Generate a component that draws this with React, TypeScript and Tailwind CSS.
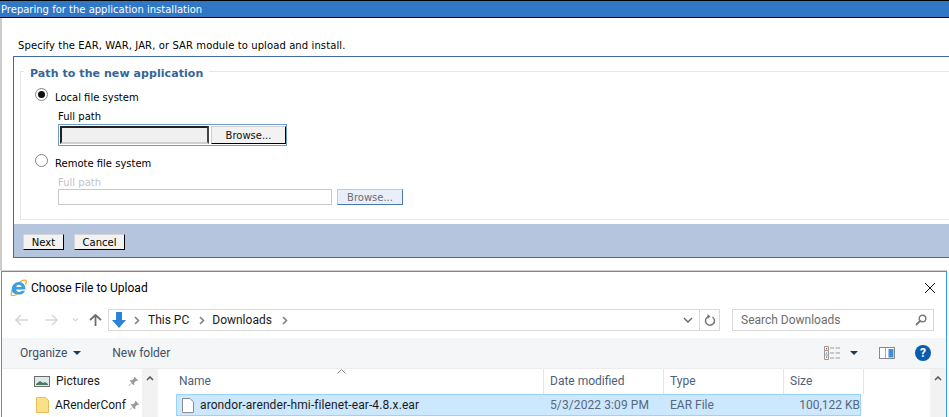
import React from "react";

const verdana = "font-['DejaVu_Sans',sans-serif]";
const segoe = "font-['Roboto',sans-serif]";

function Radio({ checked }: { checked?: boolean }) {
  return (
    <span className="w-[13px] h-[13px] rounded-full border border-[#858585] bg-white flex items-center justify-center shrink-0">
      {checked && <span className="w-[7px] h-[7px] rounded-full bg-[#111]" />}
    </span>
  );
}

function IeIcon() {
  return (
    <svg width="17" height="17" viewBox="0 0 17 17" className="shrink-0">
      <path d="M1.500 15.500C.5 13.500 3 9 6 6.200 9.500 3 13.800 .6 15.600 1.400c1.200.6.700 2.800-.2 4.300" fill="none" stroke="#f2b02e" strokeWidth="1.400" />
      <path d="M1.800 10C2 6 5 3 9 3c3.800 0 6.600 2.800 6.400 7.400H6.200c.2 1.600 1.300 2.500 2.900 2.500 1 0 1.900-.4 2.500-1.200h3.500c-.9 2.400-3.200 3.900-6 3.900C4.800 15.600 1.600 13.800 1.800 10zM6.200 8h5.400c-.2-1.500-1.200-2.300-2.700-2.300S6.500 6.500 6.200 8z" fill="#3d9fe0" />
      <path d="M.8 15.800c1.400 1.200 4.200.6 6.400-.6" fill="none" stroke="#f2b02e" strokeWidth="1.300" />
    </svg>
  );
}

function Chevron() {
  return (
    <svg width="6" height="9" viewBox="0 0 6 9" className="shrink-0 block">
      <path d="M1 1l3.500 3.500L1 8" fill="none" stroke="#808080" strokeWidth="1.600" />
    </svg>
  );
}

function PinIcon() {
  return (
    <svg width="11" height="11" viewBox="0 0 11 11" className="shrink-0">
      <path d="M6.500.8l3.700 3.700-1 .6-1-.3-2 2 .2 1.700-.8.8-2-2L1 9.900l-.4-.4 3.100-2.700-2-2 .8-.8 1.700.2 2-2-.3-1z" fill="#9a9a9a" />
    </svg>
  );
}

function ColHead({ children, w }: { children: React.ReactNode; w: string }) {
  return (
    <div className={`${w} h-[25px] border-r border-[#e5e5e5] pl-[6px] pt-[3px] text-[12px] leading-[18px] text-[#4c607a] shrink-0`}>
      {children}
    </div>
  );
}

export default function App() {
  return (
    <div className="w-[949px] h-[417px] overflow-hidden bg-white flex flex-col">
      {/* IBM console page */}
      <div className={`${verdana} h-[270px] shrink-0 flex flex-col text-[10px] text-black`}>
        <div className="h-[18px] shrink-0 bg-[#3077c6] border-y border-black pl-[1px] text-white text-[10px] leading-[17px]">
          Preparing for the application installation
        </div>
        <div className="flex-1 border-l-2 border-[#cccccc] pl-[11px] flex flex-col">
          <p className="h-[38px] shrink-0 pl-[5px] pt-[21px] leading-[14px] tracking-[0.1px]">
            Specify the EAR, WAR, JAR, or SAR module to upload and install.
          </p>
          <div className="w-[936px] h-[202px] shrink-0 border-t border-l border-b border-[#4369a8] flex flex-col">
            <div className="relative h-[167px] shrink-0 pl-[6px] pt-[14px] pb-[4px]">
              <div className="h-[149px] border-t border-l border-b border-[#e6e6e6] pl-[14px] pt-[16px] flex flex-col">
                <span className="absolute left-[10px] top-[9px] bg-white px-[6px] text-[11px] tracking-[0.07px] leading-[16px] font-bold text-[#336699]">
                  Path to the new application
                </span>
                <label className="flex items-start h-[14px] gap-[7px]">
                  <Radio checked />
                  <span className="leading-[12px] mt-[4px]">Local file system</span>
                </label>
                <div className="ml-[23px] mt-[8px] leading-[14px] h-[14px]">Full path</div>
                <div className="ml-[23px] w-[229px] h-[22px] border border-[#6f9cc8] bg-white flex items-center pl-[1px] gap-[2px]">
                  <div className="w-[149px] h-[18px] border-2 border-t-[#222] border-l-[#222] border-r-[#444] border-b-[#cfcfcf] bg-[#f0f0f0]" />
                  <div className="w-[75px] h-[18px] bg-[#f2f2f2] border border-r-black border-b-black border-t-[#cfcfcf] border-l-[#cfcfcf] flex items-center justify-center text-[#111]">
                    Browse...
                  </div>
                </div>
                <label className="flex items-start h-[15px] gap-[7px] mt-[8px]">
                  <Radio />
                  <span className="leading-[12px] mt-[4px]">Remote file system</span>
                </label>
                <div className="ml-[23px] mt-[7px] h-[13px] leading-[14px] text-[#c4c4c4]">Full path</div>
                <div className="ml-[23px] flex items-center gap-[5px]">
                  <div className="w-[274px] h-[16px] border border-[#c8c8c8] bg-white" />
                  <div className="w-[66px] h-[16px] bg-[#e8effa] border border-[#b9cbe5] border-r-[#4a78ae] border-b-[#4a78ae] flex items-center justify-center text-[#6e6e6e]">
                    Browse...
                  </div>
                </div>
              </div>
            </div>
            <div className="flex-1 bg-[#b5c5dd] flex items-center pl-[9px] gap-[10px] pt-[3px]">
              <div className="w-[41px] h-[16px] bg-[#f2f2f2] border border-[#d5d5d5] border-r-black border-b-black flex items-center justify-center">Next</div>
              <div className="w-[51px] h-[16px] bg-[#f2f2f2] border border-[#d5d5d5] border-r-black border-b-black flex items-center justify-center">Cancel</div>
            </div>
          </div>
        </div>
      </div>

      {/* Windows file dialog */}
      <div className="h-[1px] shrink-0 bg-[#d4d4d4] mr-[2px]" />
      <div className={`${segoe} ml-[1px] w-[946px] flex-1 border-l border-r border-t border-[#3a9ad9] flex flex-col min-h-0 text-[12px]`}>
        <div className="h-[31px] shrink-0 flex items-center pl-[8px] pr-[10px] gap-[4px]">
          <IeIcon />
          <span className="text-[12px] text-black">Choose File to Upload</span>
          <svg width="12" height="12" viewBox="0 0 12 12" className="ml-auto">
            <path d="M1 1l10 10M11 1L1 11" stroke="#111" strokeWidth="1" />
          </svg>
        </div>
        <div className="h-[35px] shrink-0 flex items-start pl-[13px] pt-[6px]">
          <svg width="88" height="22" viewBox="0 0 88 22" className="shrink-0">
            <path d="M13 11H1M6 6l-5 5 5 5" fill="none" stroke="#d8d8d8" strokeWidth="1.600" />
            <path d="M30 11h12M37 6l5 5-5 5" fill="none" stroke="#d8d8d8" strokeWidth="1.600" />
            <path d="M58 9.500l2.500 2.500 2.500-2.500" fill="none" stroke="#d8d8d8" strokeWidth="1.200" />
            <path d="M80.500 17V6M75 11l5.500-5 5.500 5" fill="none" stroke="#6d6d6d" strokeWidth="1.800" />
          </svg>
          <div className="ml-[5px] w-[612px] h-[22px] border border-[#d9d9d9] flex items-center shrink-0">
            <svg width="16" height="16" viewBox="0 0 16 16" className="ml-[2px] shrink-0">
              <path d="M5 0h6v8h4l-7 8-7-8h4z" fill="#2b84d9" />
            </svg>
            <span className="ml-[7px]"><Chevron /></span>
            <span className="ml-[8px] text-[#1a1a1a]">This PC</span>
            <span className="ml-[10px]"><Chevron /></span>
            <span className="ml-[7px] text-[#1a1a1a]">Downloads</span>
            <span className="ml-[10px]"><Chevron /></span>
            <svg width="10" height="6" viewBox="0 0 10 6" className="ml-auto mr-[6px] shrink-0">
              <path d="M1 1l4 4 4-4" fill="none" stroke="#666" strokeWidth="1.400" />
            </svg>
            <div className="w-[20px] h-full border-l border-[#d9d9d9] flex items-center justify-center">
              <svg width="12" height="13" viewBox="0 0 12 13">
                <path d="M4 2.700A4.500 4.500 0 1 0 8.500 3" fill="none" stroke="#777" strokeWidth="1.500" />
                <path d="M3.500 0v5l3-2.500z" fill="#777" />
              </svg>
            </div>
          </div>
          <div className="ml-[12px] w-[202px] h-[22px] border border-[#d9d9d9] flex items-center pl-[8px] pr-[6px] text-[#6d6d6d] shrink-0">
            <span>Search Downloads</span>
            <svg width="12" height="12" viewBox="0 0 12 12" className="ml-auto">
              <circle cx="7.500" cy="4.500" r="3.300" fill="none" stroke="#777" strokeWidth="1.400" />
              <path d="M5 7l-4 4" stroke="#777" strokeWidth="1.800" />
            </svg>
          </div>
        </div>
        <div className="h-[30px] shrink-0 bg-[#f5f6f7] flex items-center pl-[18px] pr-[15px] text-[#3e5068]">
          <span>Organize</span>
          <svg width="8" height="4" viewBox="0 0 8 4" className="ml-[6px]"><path d="M0 0h8L4 4z" fill="#1f3a5f" /></svg>
          <span className="ml-[31px]">New folder</span>
          <svg width="16" height="14" viewBox="0 0 16 14" className="ml-auto">
            <path d="M.5.5h4v13h-4zM.5 4.500h4M.5 9h4" fill="none" stroke="#9a9a9a" />
            <path d="M6 2h4M6 7h4M6 12h4M11.500 2H16M11.500 7H16M11.500 12H16" stroke="#9a9a9a" />
            <rect x="2" y="2" width="1.200" height="1.200" fill="#c0392b" />
            <rect x="2" y="6.500" width="1.200" height="1.200" fill="#3f8fdc" />
            <rect x="2" y="10.500" width="1.200" height="1.200" fill="#c0392b" />
          </svg>
          <svg width="8" height="4" viewBox="0 0 8 4" className="ml-[10px]"><path d="M0 0h8L4 4z" fill="#1f3a5f" /></svg>
          <svg width="16" height="12" viewBox="0 0 16 12" className="ml-[21px]">
            <rect x=".5" y=".5" width="15" height="11" fill="#fff" stroke="#8a8a8a" />
            <rect x="9.500" y="2" width="5" height="8.500" fill="#3f8fdc" />
            <path d="M6.500 1v10" stroke="#aaa" />
          </svg>
          <span className="ml-[20px] w-[16px] h-[16px] rounded-full bg-[#0b5cad] text-white text-[12px] font-bold flex items-center justify-center">?</span>
        </div>
        <div className="flex-1 min-h-0 flex border-t border-[#ececec] overflow-hidden">
          <div className="w-[140px] shrink-0 pl-[32px] text-[#1a1a1a]">
            <div className="h-[24px] flex items-center">
              <svg width="16" height="11" viewBox="0 0 16 11" className="shrink-0">
                <rect x=".5" y=".5" width="15" height="10" fill="#dfe8ef" stroke="#6d6d6d" />
                <path d="M2 8l4-3 3 2 2-1 3 2v1H2z" fill="#4b7a5c" />
              </svg>
              <span className="ml-[6px]">Pictures</span>
              <span className="ml-auto mr-[3px] flex"><PinIcon /></span>
            </div>
            <div className="h-[24px] flex items-center pl-[2px]">
              <svg width="13" height="16" viewBox="0 0 13 16" className="shrink-0">
                <path d="M.5.500h9l3 3v12H.5z" fill="#fbe08a" stroke="#e6bd52" />
              </svg>
              <span className="ml-[6px] whitespace-nowrap">ARenderConf</span>
              <span className="ml-[3px] flex"><PinIcon /></span>
            </div>
          </div>
          <div className="w-[16px] shrink-0 bg-[#f2f2f2] flex justify-center pt-[7px]">
            <svg width="8" height="5" viewBox="0 0 8 5"><path d="M1 4l3-3 3 3" fill="none" stroke="#555" strokeWidth="1.500" /></svg>
          </div>
          <div className="w-[702px] shrink-0 pl-[18px] relative">
            <svg width="9" height="5" viewBox="0 0 9 5" className="absolute left-[179px] top-[0px]">
              <path d="M.5 4.500l4-4 4 4" fill="none" stroke="#888" />
            </svg>
            <div className="flex">
              <ColHead w="w-[368px]"><span className="-ml-[3px]">Name</span></ColHead>
              <ColHead w="w-[120px]">Date modified</ColHead>
              <ColHead w="w-[120px]">Type</ColHead>
              <ColHead w="w-[80px]">Size</ColHead>
            </div>
            <div className="w-[685px] h-[22px] bg-[#cce8ff] border border-[#99d1ff] flex items-center text-[#59677a]">
              <div className="w-[367px] shrink-0 flex items-center pl-[5px] gap-[6px] text-[#1a1a1a]">
                <svg width="12" height="15" viewBox="0 0 12 15" className="shrink-0">
                  <path d="M.5.500h7.500l3.500 3.500v10.500H.500z" fill="#fff" stroke="#8c8c8c" />
                </svg>
                <span className="whitespace-nowrap tracking-[0.1px]">arondor-arender-hmi-filenet-ear-4.8.x.ear</span>
              </div>
              <div className="w-[120px] shrink-0 pl-[6px] whitespace-nowrap tracking-[0.1px]">5/3/2022 3:09 PM</div>
              <div className="w-[120px] shrink-0 pl-[6px]">EAR File</div>
              <div className="w-[76px] shrink-0 text-right">100,122 KB</div>
            </div>
          </div>
          <div className="ml-auto w-[16px] shrink-0 bg-[#f2f2f2] flex justify-center pt-[7px]">
            <svg width="8" height="5" viewBox="0 0 8 5"><path d="M1 4l3-3 3 3" fill="none" stroke="#555" strokeWidth="1.500" /></svg>
          </div>
        </div>
      </div>
    </div>
  );
}
